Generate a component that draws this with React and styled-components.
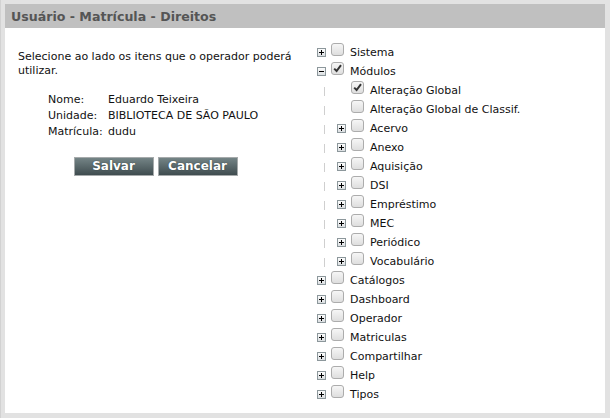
import React from "react";
import styled, { createGlobalStyle } from "styled-components";

const GlobalStyle = createGlobalStyle`
  html, body { margin: 0; padding: 0; }
  body {
    background: #e2e2e2;
    font-family: "DejaVu Sans", Verdana, sans-serif;
  }
`;

const Page = styled.div`
  width: 610px;
  height: 418px;
  box-sizing: border-box;
  padding: 4px 5px 5px 4px;
  background: #e2e2e2;
  border-left: 1px solid #d2d2d2;
  display: flex;
`;

const Dialog = styled.div`
  flex: 1;
  display: flex;
  flex-direction: column;
  background: #fff;
`;

const TitleBar = styled.div`
  height: 24px;
  background: #c0c0c0;
  display: flex;
  align-items: center;
  padding-left: 6px;
  font-size: 12.6px;
  font-weight: bold;
  color: #555;
`;

const Content = styled.div`
  flex: 1;
  display: grid;
  grid-template-columns: 301px 1fr;
  padding-top: 15px;
`;

const LeftColumn = styled.div`
  padding-top: 7px;
  display: flex;
  flex-direction: column;
`;

const Intro = styled.p`
  margin: 0;
  padding-left: 13px;
  font-size: 11px;
  line-height: 14px;
  color: #111;
`;

const Fields = styled.div`
  margin: 13px 0 0 43px;
  display: grid;
  grid-template-columns: 60px auto;
  grid-auto-rows: 16px;
  align-items: center;
  font-size: 11px;
  color: #111;
`;

const Buttons = styled.div`
  margin-top: 18px;
  display: flex;
  justify-content: center;
  gap: 4px;
`;

const Button = styled.button`
  width: 80px;
  height: 19px;
  padding: 0;
  border: 1px solid #a6aaab;
  background: linear-gradient(#748486, #3f4c4f);
  color: #fff;
  font-family: "DejaVu Sans", Verdana, sans-serif;
  font-weight: bold;
  font-size: 12px;
  line-height: 17px;
  text-shadow: 0 0 1px #1e2a2c;
  cursor: pointer;
`;

const Tree = styled.div`
  padding-left: 11px;
  display: flex;
  flex-direction: column;
`;

const Row = styled.div`
  height: 19px;
  display: flex;
  align-items: flex-start;
  font-size: 11px;
  color: #111;
`;

const Guide = styled.span`
  width: 20px;
  height: 19px;
  flex: none;
  position: relative;
  &::before {
    content: "";
    position: absolute;
    left: 7px;
    top: 6px;
    width: 1px;
    height: 9px;
    background: #cfcfcf;
  }
`;

const ToggleSlot = styled.span`
  width: 9px;
  height: 9px;
  margin: 5px 5px 0 0;
  flex: none;
  display: block;
`;

const CheckBox = styled.span`
  width: 11px;
  height: 11px;
  margin-right: 6px;
  flex: none;
  border: 1px solid #acacac;
  border-radius: 3px;
  background: linear-gradient(#f6f6f6, #dedede);
  display: flex;
  align-items: center;
  justify-content: center;
`;

const Label = styled.span`
  line-height: 19px;
  white-space: nowrap;
`;

function Toggle({ open }) {
  return (
    <ToggleSlot>
      <svg width="9" height="9" viewBox="0 0 9 9" style={{ display: "block" }}>
        <defs>
          <linearGradient id="tg" x1="0" y1="0" x2="0" y2="1">
            <stop offset="0" stopColor="#ffffff" />
            <stop offset="1" stopColor="#d8dcdf" />
          </linearGradient>
        </defs>
        <rect x="0.5" y="0.5" width="8" height="8" fill="url(#tg)" stroke="#8c979b" />
        <rect x="2" y="4" width="5" height="1" fill="#000" />
        {!open && <rect x="4" y="2" width="1" height="5" fill="#000" />}
      </svg>
    </ToggleSlot>
  );
}

function Check({ checked }) {
  return (
    <CheckBox>
      {checked && (
        <svg width="9" height="9" viewBox="0 0 9 9" style={{ display: "block" }}>
          <path d="M1.2 4.6 L3.6 7 L8 1.2" fill="none" stroke="#333" strokeWidth="2" />
        </svg>
      )}
    </CheckBox>
  );
}

const items = [
  { label: "Sistema", level: 0, expandable: true },
  { label: "Módulos", level: 0, expandable: true, open: true, checked: true },
  { label: "Alteração Global", level: 1, checked: true },
  { label: "Alteração Global de Classif.", level: 1 },
  { label: "Acervo", level: 1, expandable: true },
  { label: "Anexo", level: 1, expandable: true },
  { label: "Aquisição", level: 1, expandable: true },
  { label: "DSI", level: 1, expandable: true },
  { label: "Empréstimo", level: 1, expandable: true },
  { label: "MEC", level: 1, expandable: true },
  { label: "Periódico", level: 1, expandable: true },
  { label: "Vocabulário", level: 1, expandable: true },
  { label: "Catálogos", level: 0, expandable: true },
  { label: "Dashboard", level: 0, expandable: true },
  { label: "Operador", level: 0, expandable: true },
  { label: "Matriculas", level: 0, expandable: true },
  { label: "Compartilhar", level: 0, expandable: true },
  { label: "Help", level: 0, expandable: true },
  { label: "Tipos", level: 0, expandable: true },
];

export default function App() {
  return (
    <>
      <GlobalStyle />
      <Page>
        <Dialog>
          <TitleBar>Usuário - Matrícula - Direitos</TitleBar>
          <Content>
            <LeftColumn>
              <Intro>
                Selecione ao lado os itens que o operador poderá
                <br />
                utilizar.
              </Intro>
              <Fields>
                <span>Nome:</span>
                <span>Eduardo Teixeira</span>
                <span>Unidade:</span>
                <span>BIBLIOTECA DE SÃO PAULO</span>
                <span>Matrícula:</span>
                <span>dudu</span>
              </Fields>
              <Buttons>
                <Button type="button">Salvar</Button>
                <Button type="button">Cancelar</Button>
              </Buttons>
            </LeftColumn>
            <Tree>
              {items.map((it) => (
                <Row key={it.label}>
                  {it.level > 0 && <Guide />}
                  {it.expandable ? <Toggle open={it.open} /> : <ToggleSlot />}
                  <Check checked={it.checked} />
                  <Label>{it.label}</Label>
                </Row>
              ))}
            </Tree>
          </Content>
        </Dialog>
      </Page>
    </>
  );
}
